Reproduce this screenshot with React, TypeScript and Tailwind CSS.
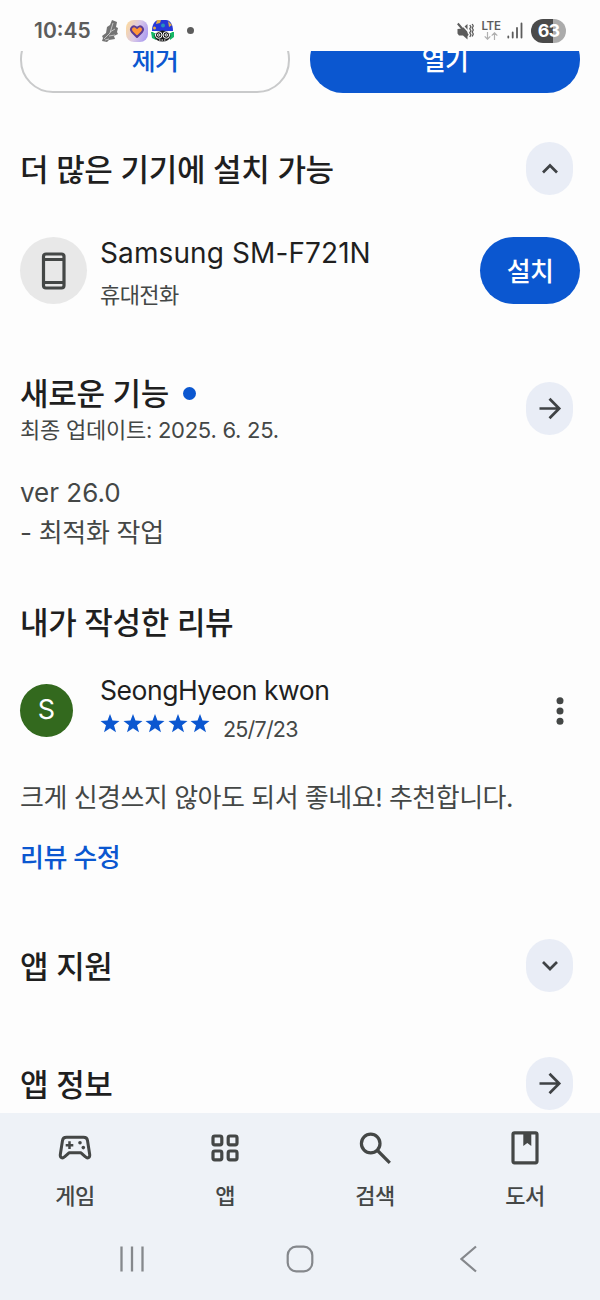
import type { ReactNode } from 'react'

type IconProps = { children: ReactNode; className?: string }

const RoundButton = ({ children, className = '' }: IconProps) => (
  <button className={`flex h-[53px] w-[47px] shrink-0 items-center justify-center rounded-[23.5px] bg-[#e9edf6] text-[#3f4245] ${className}`}>
    {children}
  </button>
)

const Chevron = ({ up }: { up?: boolean }) => (
  <svg className="h-6 w-6" viewBox="0 0 24 24" fill="none" stroke="currentColor" strokeWidth="2.7">
    <path d={up ? 'M5 15.500 12 8.500l7 7' : 'M5 8l7 7 7-7'} />
  </svg>
)

const Arrow = () => (
  <svg className="h-6 w-6" viewBox="0 0 24 24" fill="none" stroke="currentColor" strokeWidth="2.7">
    <path d="M1.500 11.500h20M11.500 1.800l9.700 9.700-9.700 9.700" />
  </svg>
)

const Heading = ({ children }: { children: ReactNode }) => (
  <h2 className="pt-px text-[31px] leading-[39px] font-medium tracking-[-0.32px] whitespace-nowrap text-[#1f1f1f]">{children}</h2>
)

const StatusBar = () => (
  <header className="flex h-[51px] items-center pt-[10px] pl-[34px] pr-[34px] text-[#5c5c5c]">
    <span className="w-[67px] text-[21px] leading-6 font-semibold">10:45</span>
    <svg className="h-[22px] w-[18px]" viewBox="0 0 18 22">
      <path d="M11 0 16 2l-1 5 2 1-1 4 1 2-4 2 1 3-6 1-2 2-5-1 1-3-1-2 4-3 1-6 3-2z" fill="#747474" />
      <path d="M12 3 9 13l-6 6M9 12l5-3M8 16l6-1M4 20l4-1" fill="none" stroke="#d5d5d5" strokeWidth=".8" />
    </svg>
    <svg className="ml-[7px] h-[22px] w-[22px]" viewBox="0 0 22 22">
      <defs>
        <linearGradient id="tile" x1="0" y1="0.3" x2="1" y2="0.7">
          <stop offset="0" stopColor="#fbd9a4" />
          <stop offset="0.5" stopColor="#d9c8e8" />
          <stop offset="1" stopColor="#a99af0" />
        </linearGradient>
      </defs>
      <rect width="22" height="22" rx="8" fill="url(#tile)" />
      <path d="M11 17 6 12c-3-4 2-8 5-4 3-4 8 0 5 4z" fill="#ff9538" stroke="#5b3b93" strokeWidth="2" strokeLinejoin="round" />
    </svg>
    <svg className="ml-[3px] h-[22px] w-[23px]" viewBox="0 0 23 22">
      <path d="M1 11C1 4 4 0 8 0h7c4 0 7 4 7 11z" fill="#2638d8" />
      <path d="M6 0h4l-1 3-4 1zM17 1l4 4-3 2z" fill="#e0ad49" />
      <circle cx="12" cy="5.500" r="2" fill="#2592bd" />
      <circle cx="3.500" cy="8" r="1.500" fill="#e0ad49" />
      <path d="M0 12h5v8l-4-2zM18 12h5v5l-4 3z" fill="#16b866" />
      <path d="M1 11h21l-2 2H3z" fill="#fff" />
      <ellipse cx="11.500" cy="16" rx="8" ry="5.500" fill="#171717" />
      <g fill="none" stroke="#fff" strokeWidth="1">
        <circle cx="7.700" cy="15" r="3.300" />
        <circle cx="15.300" cy="15" r="3.300" />
        <circle cx="7.700" cy="15" r="1.200" />
        <circle cx="15.300" cy="15" r="1.200" />
        <path d="M8 20h7" strokeDasharray="1.500 1" />
      </g>
    </svg>
    <span className="ml-[13px] h-[7px] w-[7px] rounded-full bg-[#5c5c5c]" />
    <div className="ml-auto flex items-center">
      <svg className="h-[18px] w-[18px]" viewBox="0 0 18 18">
        <path d="M1.500 7 6 6.500 11.500 2v15.500L7 13.500H3L1.500 11.500z" fill="#5c5c5c" />
        <path d="M3.500 0 15 12.500" stroke="#fdfdfd" strokeWidth="1.500" />
        <path d="M1.800 1.500 12 13.500" stroke="#5c5c5c" strokeWidth="2" />
        <path d="m13.800 3 1.100 1.800-1.100 2 1.100 2-1.100 2 1.100 2-1.100 2.200M16.200 2l1.100 2-1.100 2 1.100 2-1.100 2 1.100 2-1.100 2.500" fill="none" stroke="#5c5c5c" strokeWidth="1.300" />
      </svg>
      <div className="ml-[7px] flex w-[20px] flex-col items-center">
        <span className="text-[11.500px] leading-[11px] font-semibold tracking-[-0.3px]">LTE</span>
        <svg className="h-[8px] w-[14px]" viewBox="0 0 14 8" fill="none" stroke="#b0b0b0" strokeWidth="1.200">
          <path d="M3.500 0v7M.7 4.300l2.800 2.900 2.800-2.900M10.500 8V1M7.700 3.700 10.500.8l2.800 2.900" />
        </svg>
      </div>
      <svg className="ml-[6px] h-[17px] w-[16px]" viewBox="0 0 16 17" stroke="#5c5c5c" strokeWidth="1.800" strokeLinecap="round">
        <path d="M1.300 14.500v1M5.700 10.500v5M10 6v9.500M14.500 1.500v14" />
      </svg>
      <span className="ml-[8px] flex h-[24px] w-[35px] items-center justify-center rounded-full bg-linear-to-r from-[#4a4a4a] from-63% to-[#ababab] to-63% text-[18px] leading-6 font-bold tracking-[-1px] text-white">
        63
      </span>
    </div>
  </header>
)

const Star = () => (
  <svg className="h-[19px] w-[20px]" viewBox="0 0 20 19" fill="#0b57d0">
    <path d="m10 0 2.500 6.600 7 .4-5.500 4.300 2 6.900L10 14.300l-6 3.900 2-6.900L.5 7l7-.4z" />
  </svg>
)

const tabs = [
  {
    label: '게임',
    icon: (
      <svg className="h-[34px] w-[34px]" viewBox="0 0 34 34" fill="none" stroke="currentColor" strokeWidth="3" strokeLinejoin="round">
        <path d="M8.500 6.300h17c2.500 0 3.700 1.200 4 3.200l2.200 14c.4 3.300-2.200 4.300-4.200 2.300l-4.500-4H11l-4.500 4c-2 2-4.600 1-4.200-2.300l2.200-14c.3-2 1.500-3.200 4-3.200z" />
        <path d="M11.500 10.300v7.700M7.700 14.200h7.600" strokeWidth="2.500" />
        <circle cx="22" cy="11.800" r="1.800" fill="currentColor" stroke="none" />
        <circle cx="25.300" cy="16.600" r="1.800" fill="currentColor" stroke="none" />
      </svg>
    ),
  },
  {
    label: '앱',
    icon: (
      <svg className="h-[34px] w-[34px]" viewBox="0 0 34 34" fill="none" stroke="currentColor" strokeWidth="3.200">
        <rect x="5" y="5" width="8.800" height="8.800" rx="1.800" />
        <rect x="20.200" y="5" width="8.800" height="8.800" rx="1.800" />
        <rect x="5" y="20" width="8.800" height="8.800" rx="1.800" />
        <rect x="20.200" y="20" width="8.800" height="8.800" rx="1.800" />
      </svg>
    ),
  },
  {
    label: '검색',
    icon: (
      <svg className="h-[34px] w-[34px]" viewBox="0 0 34 34" fill="none" stroke="currentColor" strokeWidth="3.200">
        <circle cx="12.700" cy="12.500" r="9.300" />
        <path d="m19.500 19.500 12.300 12.300" />
      </svg>
    ),
  },
  {
    label: '도서',
    icon: (
      <svg className="h-[34px] w-[34px]" viewBox="0 0 34 34" fill="none" stroke="currentColor" strokeWidth="3.200">
        <rect x="5" y="1.800" width="24" height="30" rx="1.500" />
        <path d="M15.300 1h8v14l-4-3-4 3z" fill="currentColor" stroke="none" />
      </svg>
    ),
  },
]

const BottomBar = () => (
  <footer className="h-[187px] bg-[#eef2f7]">
    <nav className="flex pt-[18px] text-[#444746]">
      {tabs.map((tab) => (
        <a key={tab.label} className="flex w-[150px] flex-col items-center">
          {tab.icon}
          <span className="mt-[17px] text-[22px] leading-[28px] font-medium tracking-[-0.5px]">{tab.label}</span>
        </a>
      ))}
    </nav>
    <div className="mt-[35px] flex h-[28px] items-center pl-[119px] text-[#85888c]">
      <svg className="h-[28px] w-[26px]" viewBox="0 0 26 28" stroke="currentColor" strokeWidth="2.300">
        <path d="M2.500 1.500v25M13 1.500v25M23.500 1.500v25" />
      </svg>
      <svg className="ml-[141px] h-[28px] w-[28px]" viewBox="0 0 28 28" fill="none" stroke="currentColor" strokeWidth="2.200">
        <rect x="1.700" y="1.700" width="24.600" height="24.600" rx="8.500" />
      </svg>
      <svg className="ml-[146px] h-[28px] w-[18px]" viewBox="0 0 18 28" fill="none" stroke="currentColor" strokeWidth="2.200">
        <path d="M16 1.500 1.500 14 16 26.500" />
      </svg>
    </div>
  </footer>
)

export default function App() {
  return (
    <div className="flex h-[1300px] w-[600px] flex-col overflow-hidden bg-[#fdfdfd] font-['Inter','Noto_Sans_CJK_KR',sans-serif]">
      <StatusBar />
      <main className="h-[1062px] overflow-hidden">
        <div className="flex h-[42px] items-end gap-5 overflow-hidden px-5 text-[26px] font-medium tracking-[-0.7px]">
          <button className="h-[67px] w-[270px] shrink-0 rounded-[33px] border-2 border-[#c9cacb] pt-[2px] leading-[59px] text-[#0b57d0]">제거</button>
          <button className="h-[67px] w-[270px] shrink-0 rounded-[33px] bg-[#0b57d0] pt-[2px] leading-[63px] text-white">열기</button>
        </div>

        <section className="mt-[49px] px-5">
          <div className="flex h-[53px] items-center justify-between pr-[7px]">
            <Heading>더 많은 기기에 설치 가능</Heading>
            <RoundButton><Chevron up /></RoundButton>
          </div>
          <div className="mt-[42px] flex h-[67px] items-center">
            <div className="flex h-[67px] w-[67px] items-center justify-center rounded-full bg-[#e8e8e8]">
              <svg className="h-[38px] w-[26px]" viewBox="0 0 26 38" fill="none" stroke="#444746" strokeWidth="3.200">
                <rect x="2.500" y="2" width="20.500" height="34" rx="2.500" />
                <path d="M2 7.500h21M2 30.500h21" strokeWidth="2.800" />
              </svg>
            </div>
            <div className="ml-[13px] flex-1 pt-[4px]">
              <p className="text-[28px] leading-[40px] tracking-[0.1px] text-[#1f1f1f]">Samsung SM-F721N</p>
              <p className="mt-[4px] text-[22px] leading-[36px] tracking-[-0.6px] text-[#444746]">휴대전화</p>
            </div>
            <button className="h-[67px] w-[100px] rounded-full bg-[#0b57d0] pt-[2px] text-[26px] font-medium tracking-[-0.7px] text-white">설치</button>
          </div>
        </section>

        <section className="mt-[69px] px-5 text-[#444746]">
          <div className="flex h-[71px] justify-between pr-[7px]">
            <div>
              <div className="flex items-center">
                <Heading>새로운 기능</Heading>
                <span className="ml-[14px] h-[13px] w-[13px] rounded-full bg-[#0b57d0]" />
              </div>
              <p className="text-[22px] leading-[34px] tracking-[-0.25px]">최종 업데이트: 2025. 6. 25.</p>
            </div>
            <RoundButton className="mt-[9px]"><Arrow /></RoundButton>
          </div>
          <p className="mt-[29px] text-[26px] leading-[40px]">ver 26.0</p>
          <p className="text-[26px] leading-[40px] tracking-[-0.3px]">- 최적화 작업</p>
        </section>

        <section className="mt-[49px] px-5 text-[#444746]">
          <Heading>내가 작성한 리뷰</Heading>
          <div className="mt-[28px] flex h-[75px] items-center">
            <div className="mt-[6px] flex h-[53px] w-[53px] items-center justify-center rounded-full bg-[#33691e] text-[27px] text-white">S</div>
            <div className="ml-[27px] flex-1">
              <p className="pt-px text-[26.500px] leading-[39px] tracking-[-0.45px] text-[#1f1f1f]">SeongHyeon kwon</p>
              <div className="flex h-[35px]">
                <div className="flex gap-[2.500px] pt-[4px]">
                  <Star /><Star /><Star /><Star /><Star />
                </div>
                <span className="ml-[13px] pt-[3px] text-[21.500px] leading-[32px] tracking-[-0.8px]">25/7/23</span>
              </div>
            </div>
            <svg className="mt-[6px] mr-[16px] h-[28px] w-[8px]" viewBox="0 0 8 28" fill="#444746">
              <circle cx="4" cy="3.800" r="3.500" />
              <circle cx="4" cy="14" r="3.500" />
              <circle cx="4" cy="24.200" r="3.500" />
            </svg>
          </div>
          <p className="mt-[33px] text-[26px] leading-[40px] tracking-[-0.5px] whitespace-nowrap">크게 신경쓰지 않아도 되서 좋네요! 추천합니다.</p>
          <p className="mt-[20px] text-[26px] leading-[40px] font-medium tracking-[-0.5px] text-[#0b57d0]">리뷰 수정</p>
        </section>

        <section className="mt-[61px] px-5">
          <div className="flex h-[53px] items-center justify-between pr-[7px]">
            <Heading>앱 지원</Heading>
            <RoundButton><Chevron /></RoundButton>
          </div>
          <div className="mt-[65px] flex h-[53px] items-center justify-between pr-[7px]">
            <Heading>앱 정보</Heading>
            <RoundButton><Arrow /></RoundButton>
          </div>
        </section>
      </main>
      <BottomBar />
    </div>
  )
}
